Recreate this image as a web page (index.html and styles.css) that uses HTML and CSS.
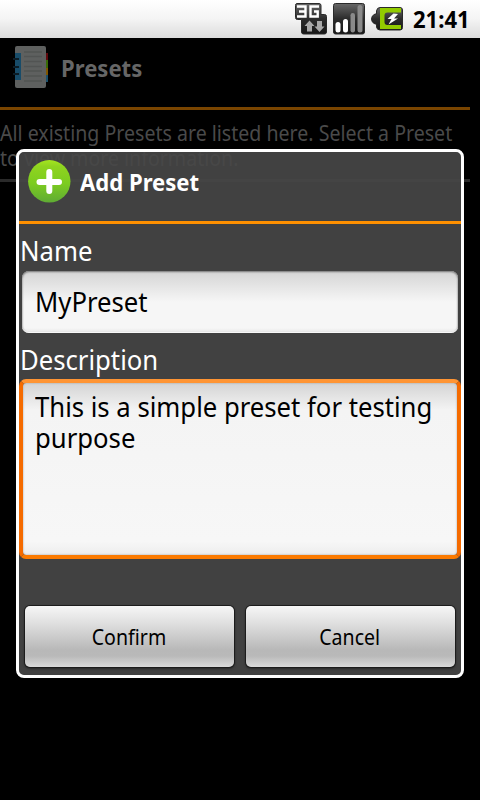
FILE: index.html
```html
<!DOCTYPE html>
<html lang="en">
<head>
<meta charset="utf-8">
<title>Add Preset</title>
<link rel="stylesheet" href="styles.css">
</head>
<body>
<header class="status">
  <svg width="34" height="34" viewBox="0 0 34 34">
    <defs><linearGradient id="dark" x1="0" y1="0" x2="0" y2="1"><stop offset="0" stop-color="#686868"/><stop offset=".5" stop-color="#2c2c2c"/><stop offset="1" stop-color="#161616"/></linearGradient></defs>
    <path d="M3 1.500H25Q27 1.500 27 3.500V12.500H30.500Q32.500 12.500 32.500 14.500V30Q32.500 32 30.500 32H9.500Q7.500 32 7.500 30V17.500H3.500Q1.500 17.500 1.500 15.500V3.500Q1.500 1.500 3 1.500Z" fill="url(#dark)" stroke="#2a2a2a"/>
    <path d="M3 4.500H11.500V14.500H3M5 9.500H11M25 4.500H16.500V14.500H23.700V9.500H20" fill="none" stroke="#fff" stroke-width="2.400"/>
    <path d="M15.500 18.500L20.500 24H18V29.500H13V24H10.500ZM25.500 30L20.500 24.500H23V19H28V24.500H30.500Z" fill="#a8a8a8"/>
  </svg>
  <svg width="34" height="34" viewBox="0 0 34 34">
    <rect x="1.500" y="1.500" width="31" height="30.500" rx="2" fill="url(#dark)" stroke="#2a2a2a"/>
    <rect x="3.500" y="20" width="5" height="10.500" rx="2.500" fill="#fff"/><rect x="11" y="17" width="5" height="13.500" rx="2.500" fill="#fff"/>
    <rect x="18.500" y="11" width="4.500" height="19.500" rx="2.200" fill="#8a8a8a"/><rect x="25.500" y="3" width="5" height="27.500" rx="2.500" fill="#8a8a8a"/>
  </svg>
  <svg width="34" height="34" viewBox="0 0 34 34">
    <path d="M10 5.500H30Q32.500 5.500 32.500 8V25.500Q32.500 28 30 28H10Q7 28 6.500 25V22H5Q1.500 20.500 1.500 17T5 12H6.500V9Q7 5.500 10 5.500Z" fill="url(#dark)" stroke="#2a2a2a"/>
    <path d="M10 6H31V10.500H17.500Q14.500 10.500 14.500 13.500V20Q14.500 23 17.500 23H31V27H10Z" fill="#92cc00"/>
    <path d="M23.500 11.500L17.500 17H21.500L18.500 22.500L28 16.500H24L28 12Z" fill="#fff"/>
  </svg>
  <span class="bold clock">21:41</span>
</header>
<main>
  <div class="page-title">
    <svg width="36" height="44" viewBox="0 0 36 44">
      <path d="M30 7h5v7h-5z" fill="#60090d"/><path d="M30 14h5v8h-5z" fill="#396b05"/><path d="M30 22h5v7h-5z" fill="#805600"/><path d="M30 29h5v7h-5z" fill="#1c506b"/>
      <rect x="2" y="0" width="31" height="42" rx="2" fill="#5e605f"/>
      <path d="M2 7h6v27H2z" fill="#184c69"/>
      <path d="M0 13h6M0 21h6M0 28h6" stroke="#0b1c26" stroke-width="2"/>
      <path d="M11 6h18M11 10.500h18M11 15.500h18M11 20.500h18M11 25h18M11 30h18M11 35h18" stroke="#525453" stroke-width="1.500"/>
    </svg>
    <h1 class="bold heading">Presets</h1>
  </div>
  <p class="intro"><span class="small">All existing Presets are listed here. Select a Preset</span><br><span class="small">to view more information.</span></p>
</main>
<section class="dialog">
  <div class="dialog-title">
    <svg width="44" height="44" viewBox="0 0 44 44">
      <defs><linearGradient id="green" x1="0" y1="0" x2="0" y2="1"><stop offset="0" stop-color="#a4e51f"/><stop offset=".15" stop-color="#8fd41f"/><stop offset=".55" stop-color="#7ccc20"/><stop offset="1" stop-color="#5fab34"/></linearGradient></defs>
      <circle cx="22.300" cy="22.300" r="21.200" fill="url(#green)"/>
      <path d="M22.300 13V32M12.500 23H32" stroke="#fff" stroke-width="6" stroke-linecap="round"/>
    </svg>
    <h2 class="bold heading">Add Preset</h2>
  </div>
  <div class="label"><span class="large">Name</span></div>
  <div class="field"><span class="large">MyPreset</span></div>
  <div class="label second"><span class="large">Description</span></div>
  <div class="area"><span class="large">This is a simple preset for testing</span><br><span class="large">purpose</span></div>
  <div class="actions"><button><span class="small">Confirm</span></button><button><span class="small">Cancel</span></button></div>
</section>
</body>
</html>
```
FILE: styles.css
```css
* { box-sizing: border-box; margin: 0; padding: 0; }
body { width: 480px; height: 800px; background: #000; font-family: "Noto Sans", sans-serif; position: relative; overflow: hidden; }
svg { flex: none; }
.bold, .small, .large { display: inline-block; white-space: nowrap; transform-origin: left; }
.bold { transform: scaleX(.92); }
.small { transform: scaleX(.932); }
.large { transform: scaleX(.951); }
.status { height: 38px; display: flex; align-items: center; justify-content: flex-end; padding-right: 10px; gap: 4px; background: linear-gradient(#fff, #f4f4f4 50%, #dcdcdc); }
.clock { font: bold 24px/38px "Noto Sans", sans-serif; transform-origin: right; }
.page-title { width: 470px; height: 72px; display: flex; padding: 8px 0 0 13px; border-bottom: 3px solid #7a4500; gap: 12px; }
.heading { font: bold 24px/44px "Noto Sans", sans-serif; color: #666; }
.intro { width: 470px; height: 72px; padding-top: 11px; font-size: 21px; line-height: 24.500px; color: #4a4a4a; border-bottom: 3px solid #2a2a2a; }
.dialog { position: absolute; left: 16px; top: 149px; width: 448px; height: 529px; border: 3px solid #fff; border-radius: 8px; background: rgba(71, 71, 71, .91); background-clip: padding-box; color: #fff; }
.dialog-title { display: flex; height: 72px; padding: 7px 8px; gap: 9px; border-bottom: 3px solid #ff9000; }
.dialog .heading { color: #fff; line-height: 46px; }
.label { height: 47px; padding-left: .5px; font-size: 27px; line-height: 54px; }
.second { height: 46px; }
.field { height: 62px; margin: 0 3px; padding: 0 13px; border-radius: 7px; font-size: 27px; line-height: 61px; color: #000; background: linear-gradient(#d4d4d4, #f6f6f6 50%, #f6f6f6 92%, #e6e6e6); box-shadow: inset 0 1px 2px #777, inset 0 -1px 0 #fff, inset 0 0 2px #aaa; }
.area { height: 180px; border: 4px solid; border-color: #ff9534 #f56b00 #fb7a00; border-radius: 7px; padding: 8px 12px; font-size: 27px; line-height: 31px; color: #000; background: linear-gradient(#d4d4d4, #f4f4f4 16%, #f7f7f7 92%, #ededed) padding-box; box-shadow: inset 0 0 2px #999; }
.actions { display: flex; gap: 12px; padding: 47px 6px 0; }
button { flex: 1; height: 61px; padding-right: 2px; font: 21px "Noto Sans", sans-serif; color: #000; border: 0; border-radius: 5px; background: linear-gradient(#f6f6f6, #dedede 30%, #b8b8b8 72%, #b9b9b9 82%, #dadada); box-shadow: 0 0 0 1px #1c1c1c, 0 1px 2px 1px #2a2a2a; }
button .small { transform-origin: center; }
```
